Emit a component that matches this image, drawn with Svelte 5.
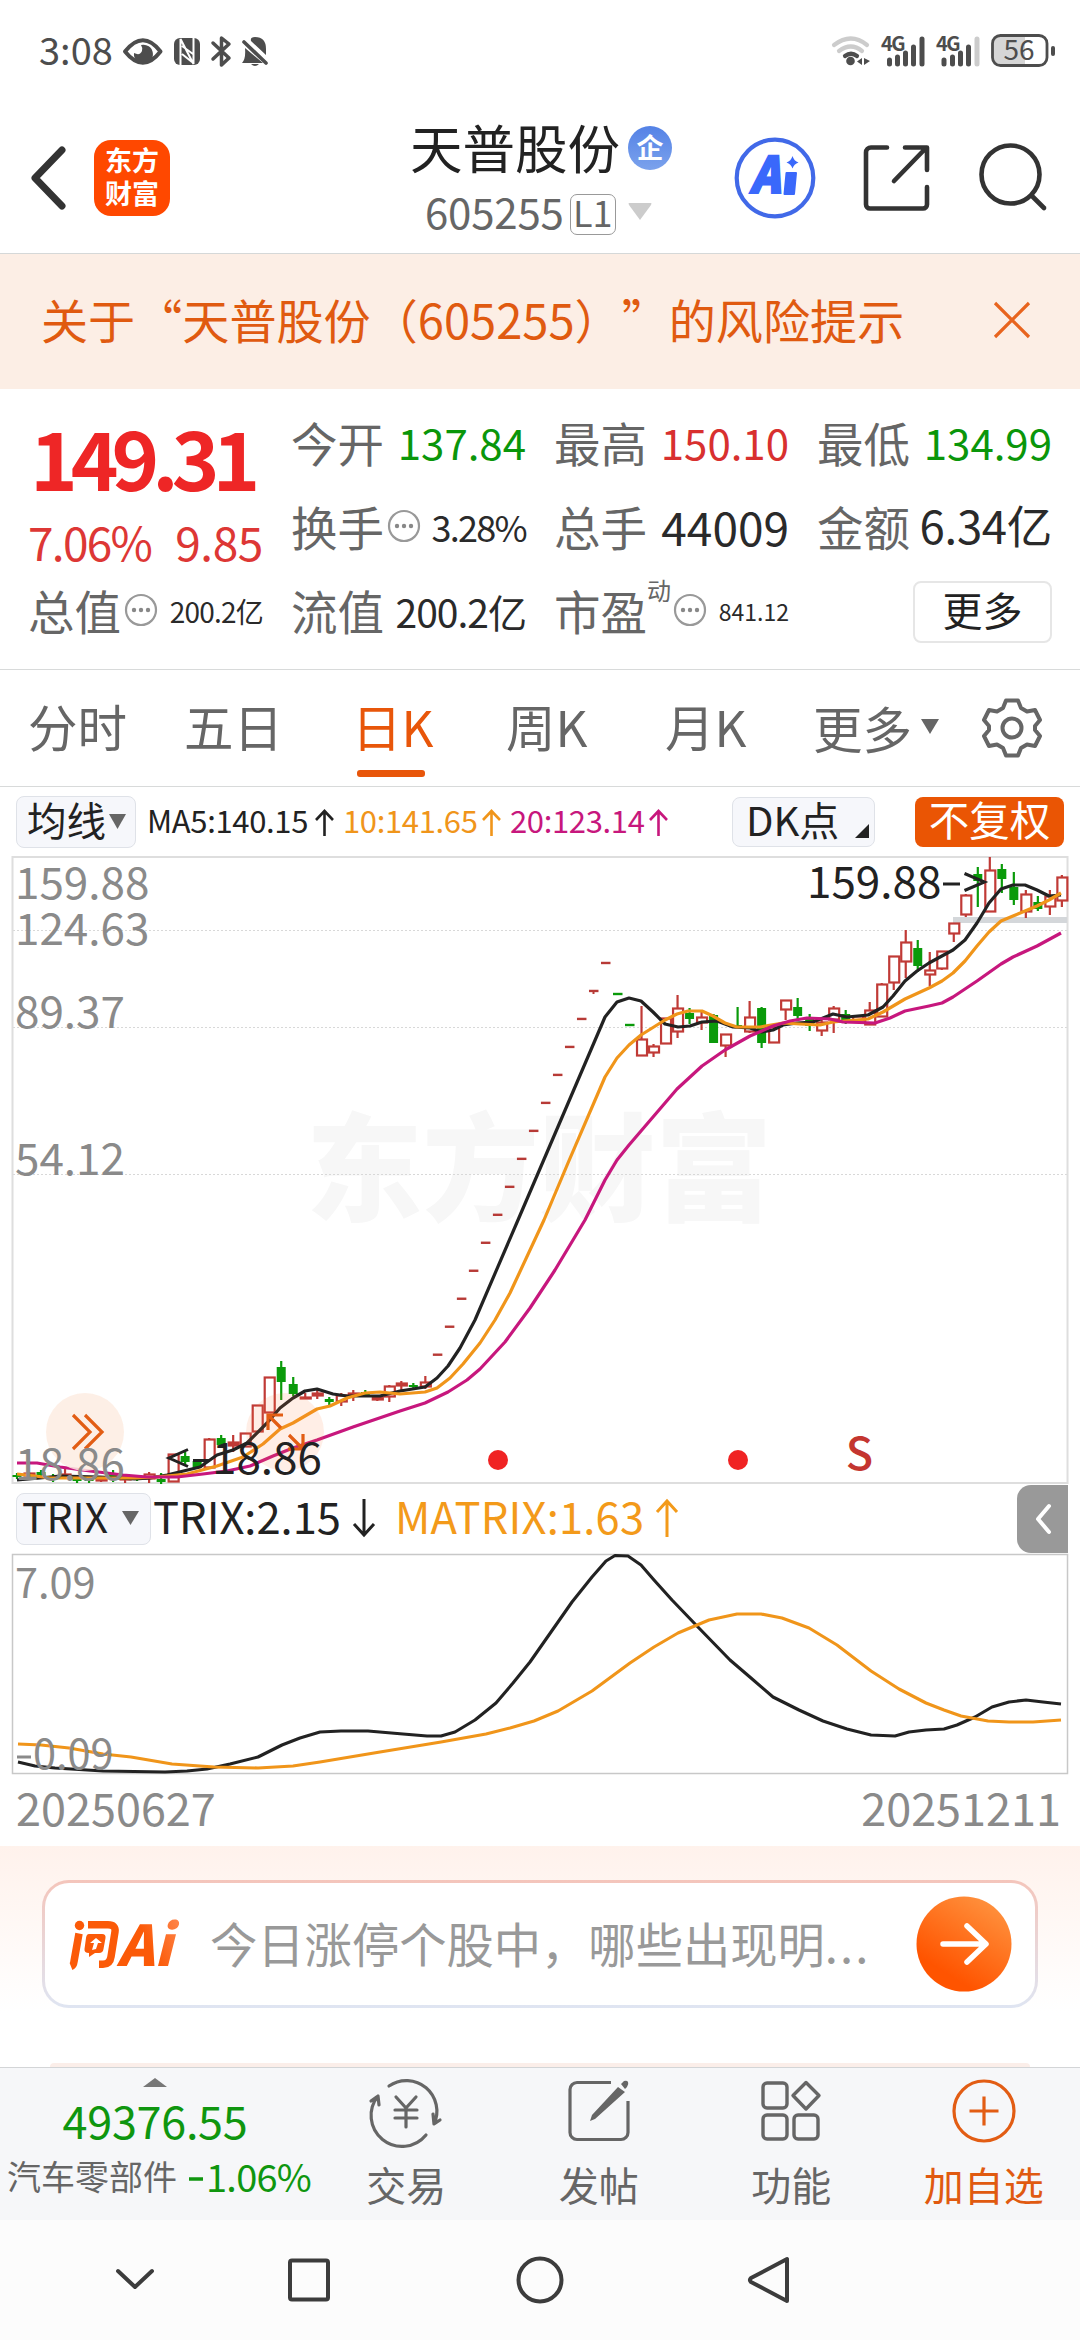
<script>
  const X0 = 17;
  const STEP = 12.01;
  const cx = (i) => X0 + i * STEP;

  // [index, direction, body top, body bottom, wick top, wick bottom]
  const candles = [
    [0, 'g', 1475, 1477, 1473, 1479], [1, 'r', 1473, 1476, 1472, 1478], [2, 'g', 1472, 1475, 1470, 1479],
    [3, 'g', 1476, 1478, 1474, 1482], [4, 'r', 1474, 1477, 1469, 1479], [5, 'g', 1478, 1481, 1475, 1483],
    [6, 'g', 1478, 1481, 1476, 1483], [7, 'r', 1478, 1481, 1476, 1482], [8, 'g', 1474, 1478, 1470, 1482],
    [9, 'r', 1476, 1480, 1474, 1483], [10, 'g', 1477, 1479, 1475, 1481], [11, 'r', 1474, 1479, 1472, 1483],
    [12, 'g', 1479, 1482, 1473, 1484], [13, 'r', 1454, 1482, 1454, 1482], [14, 'g', 1456, 1462, 1452, 1465],
    [15, 'g', 1461, 1468, 1460, 1469], [16, 'r', 1439, 1468, 1438, 1468], [17, 'g', 1438, 1445, 1435, 1447],
    [18, 'r', 1442, 1446, 1435, 1452], [19, 'r', 1433, 1447, 1433, 1447], [20, 'r', 1405, 1432, 1405, 1432],
    [21, 'r', 1377, 1413, 1377, 1413], [22, 'g', 1367, 1382, 1361, 1400], [23, 'g', 1384, 1394, 1377, 1396],
    [24, 'r', 1397, 1398, 1393, 1399], [25, 'r', 1393, 1396, 1388, 1399], [26, 'g', 1399, 1402, 1397, 1405],
    [27, 'r', 1395, 1402, 1393, 1406], [28, 'r', 1393, 1396, 1390, 1401], [29, 'g', 1392, 1395, 1390, 1396],
    [30, 'r', 1397, 1400, 1395, 1401], [31, 'r', 1386, 1397, 1385, 1402], [32, 'r', 1383, 1386, 1381, 1391],
    [33, 'g', 1385, 1387, 1383, 1390], [34, 'r', 1382, 1387, 1376, 1389],
    [52, 'r', 1039, 1056, 1006, 1056], [53, 'r', 1046, 1053, 1044, 1057], [54, 'r', 1018, 1044, 1018, 1044],
    [55, 'r', 1008, 1032, 995, 1038], [56, 'g', 1013, 1019, 1008, 1024], [57, 'r', 1017, 1023, 1012, 1030],
    [58, 'g', 1015, 1043, 1014, 1043], [59, 'r', 1034, 1046, 1034, 1057], [60, 'g', 1025, 1027, 1007, 1028],
    [61, 'r', 1017, 1032, 1001, 1033], [62, 'g', 1008, 1043, 1007, 1048], [63, 'r', 1027, 1043, 1027, 1043],
    [64, 'r', 1000, 1010, 1000, 1020], [65, 'g', 1007, 1016, 998, 1020], [66, 'g', 1017, 1026, 1014, 1031],
    [67, 'r', 1022, 1031, 1020, 1036], [68, 'r', 1008, 1020, 1006, 1033], [69, 'g', 1014, 1020, 1010, 1024],
    [70, 'r', 1016, 1021, 1015, 1022], [71, 'r', 1010, 1025, 1002, 1025], [72, 'r', 984, 1017, 983, 1017],
    [73, 'r', 956, 983, 956, 990], [74, 'r', 942, 962, 930, 978], [75, 'g', 948, 966, 940, 972],
    [76, 'r', 970, 975, 952, 986], [77, 'r', 951, 969, 951, 970], [78, 'r', 923, 934, 923, 942],
    [79, 'r', 895, 915, 894, 917], [80, 'g', 874, 881, 867, 907], [81, 'r', 870, 912, 857, 912],
    [82, 'g', 869, 879, 864, 893], [83, 'g', 887, 900, 872, 905], [84, 'r', 894, 912, 890, 918],
    [85, 'g', 902, 909, 896, 911], [86, 'r', 896, 907, 890, 915], [87, 'r', 877, 901, 875, 907]
  ];

  // one-price trading days
  const dashes = [
    ...Array.from({ length: 15 }, (_, k) => [35 + k, 'r', 1354.7 - k * 27.98]),
    [50, 'g', 994], [51, 'g', 1025]
  ];

  const ma5 = '17,1480 40,1478 60,1476 100,1477 135,1479 150,1478 167,1475 200,1467 217,1455 233,1450 247,1443 267,1423 280,1408 293,1398 305,1391 317,1389 333,1394 347,1396 380,1396 400,1391 425,1387 437,1378 448,1366 460,1348 475,1320 518,1220 605,1017 617,1002 629,998 641,1001 653,1012 665,1024 678,1027 690,1026 702,1022 717,1021 733,1027 750,1028 762,1032 773,1030 783,1025 797,1023 813,1022 833,1014 847,1017 868,1015 883,1007 893,996 905,981 917,971 929,963 953,950 965,940 977,923 989,903 1001,889 1013,885 1025,885 1037,890 1049,896 1061,895';
  const ma10 = '17,1474 35,1476 50,1478 100,1478 135,1478 157,1477 187,1474 217,1466 243,1457 263,1444 280,1429 293,1423 317,1409 330,1406 347,1398 365,1393 380,1392 400,1394 425,1392 437,1388 450,1378 463,1364 480,1343 495,1320 510,1293 544,1220 568,1163 605,1077 617,1058 629,1045 641,1035 665,1020 677,1014 688,1011 702,1011 713,1016 725,1023 737,1027 760,1027 783,1023 800,1024 820,1025 833,1022 868,1019 883,1012 905,999 929,988 942,981 953,973 965,961 977,946 989,932 1001,921 1013,916 1025,911 1037,906 1049,900 1061,893';
  const ma20 = '17,1463 37,1463 60,1467 90,1471 123,1475 147,1477 177,1477 203,1474 227,1471 250,1466 273,1456 293,1448 317,1440 353,1427 400,1411 425,1403 448,1392 467,1380 480,1369 505,1342 530,1308 555,1270 585,1220 605,1180 617,1160 629,1145 653,1117 677,1089 702,1066 725,1050 750,1036 773,1026 790,1021 807,1018 830,1019 843,1022 875,1023 890,1018 905,1011 929,1006 942,1003 953,997 977,981 1001,964 1013,957 1037,946 1061,933';
  const trix = '18,1762 35,1766 55,1768 103,1771 165,1772 187,1771 207,1769 230,1764 258,1757 282,1745 300,1738 320,1732 341,1731 368,1731 403,1734 427,1736 441,1736 455,1732 475,1720 496,1703 513,1683 530,1662 551,1632 572,1602 592,1577 606,1561 615,1555.5 628,1556 641,1565 654,1580 672,1600 696,1625 730,1660 751,1678 773,1697 799,1710 823,1721 847,1729 871,1735 895,1736 909,1732 926,1730 944,1729 957,1725 975,1717 992,1707 1009,1702 1026,1700 1043,1702 1061,1704';
  const matrix = '18,1744 41,1745 69,1748 103,1754 131,1757 172,1764 214,1767 258,1768 293,1766 320,1762 380,1752 441,1742 486,1734 510,1728 534,1721 558,1711 592,1691 630,1663 654,1647 678,1633 709,1620 737,1614 761,1614 782,1618 809,1628 837,1645 871,1671 899,1689 926,1703 944,1710 961,1716 988,1721 1009,1722 1033,1722 1061,1720';

  const gridLines = [930.5, 1027.5, 1174.5];
  const priceLabels = [['159.88', 899], ['124.63', 945], ['89.37', 1028], ['54.12', 1175]];
</script>

{#snippet dots()}
  <svg class="dots" width="34" height="34" viewBox="0 0 34 34">
    <circle cx="17" cy="17" r="15" fill="none" stroke="#999" stroke-width="2.2" />
    <g fill="#888"><circle cx="10" cy="17" r="2.2" /><circle cx="17" cy="17" r="2.2" /><circle cx="24" cy="17" r="2.2" /></g>
  </svg>
{/snippet}

{#snippet up(color)}
  <svg class="arrow" width="19" height="27" viewBox="0 0 19 27"><path d="M9.500 27V3M1 11l8.500-9 8.500 9" fill="none" stroke={color} stroke-width="2.600" /></svg>
{/snippet}

<div class="screen">
  <div class="status">
    <span class="clock">3:08</span>
    <svg class="st-icons" width="146" height="32" viewBox="123 35 146 32">
      <path d="M125 51.500Q143 29 160.500 51.500Q143 74 125 51.500Z" fill="none" stroke="#4d4d4d" stroke-width="4" stroke-linejoin="round" />
      <path d="M141 45a9.500 9.500 0 1 1-7 8q6 3 8-2q1-3-1-6z" fill="#4d4d4d" />
      <path d="M180 38h14a6 6 0 0 1 6 6v15a6 6 0 0 1-6 6h-14a6 6 0 0 1-6-6V44a6 6 0 0 1 6-6z" fill="#4d4d4d" />
      <path d="M180.500 65V39l13 25V38M182 46l11 8M182 54l10 8" fill="none" stroke="#fff" stroke-width="2" />
      <path d="M213 43l16 15-7.500 7V38l7.500 6-16 15" fill="none" stroke="#4d4d4d" stroke-width="3.500" stroke-linejoin="round" stroke-linecap="round" />
      <path d="M251 41q-1-4 4-4q11 0 11 12v6zM245 48l18 15h-21q4-4 3-15zM251 64h8q-4 4-8 0z" fill="#4d4d4d" />
      <path d="M244 42l22 21" stroke="#4d4d4d" stroke-width="3.600" stroke-linecap="round" />
    </svg>
    <svg class="st-right" width="226" height="34" viewBox="831 34 226 34">
      <g fill="none" stroke-width="4.200" stroke-linecap="round">
        <path d="M834 45q17-13 33 0" stroke="#ccc" /><path d="M839 51q12-9 23 0" stroke="#ccc" /><path d="M845 56q6-4.500 12 0" stroke="#4d4d4d" />
      </g>
      <circle cx="850.500" cy="61" r="4.300" fill="#4d4d4d" />
      <path d="M862 58v7l-5-3.500zM864 58v7l6-4z" fill="#4d4d4d" />
      <text x="881" y="51" class="net">4G</text>
      <text x="936" y="51" class="net">4G</text>
      <g stroke="#4d4d4d" stroke-width="5" stroke-linecap="round">
        <path d="M889.500 60v4M897.500 57v7M905.500 53v11M913.500 47v17M922 39v25M944 60v4M952.500 57v7M960.500 53v11M968.500 47v17" />
        <path d="M977 39v25" stroke="#ccc" />
      </g>
      <path d="M999 37h26v27h-26a6 6 0 0 1-6-6V43a6 6 0 0 1 6-6z" fill="#d6d6d6" />
      <rect x="992.500" y="35.500" width="54.500" height="30" rx="8" fill="none" stroke="#4d4d4d" stroke-width="2.800" />
      <path d="M1053 48v6" stroke="#4d4d4d" stroke-width="4" stroke-linecap="round" />
      <text x="1019" y="60" class="batt">56</text>
    </svg>
  </div>

  <header>
    <svg class="back" width="37" height="66" viewBox="0 0 37 66"><path d="M32 5L5 33l27 28" fill="none" stroke="#333" stroke-width="7" stroke-linecap="round" stroke-linejoin="round" /></svg>
    <div class="logo"><span>东方</span><span>财富</span></div>
    <div class="title">
      <div class="name">天普股份<span class="qi">企</span></div>
      <div class="code">605255<span class="lv">L1</span><svg width="24" height="17" viewBox="0 0 24 17"><path d="M1 0h22q1 0 0 2L12 17 1 2q-1-2 0-2z" fill="#ccc" /></svg></div>
    </div>
    <svg class="tools" width="314" height="84" viewBox="734 136 314 84">
      <circle cx="775" cy="178" r="38.300" fill="none" stroke="#4169e8" stroke-width="4.200" />
      <text x="750" y="198" class="ai" textLength="30" lengthAdjust="spacingAndGlyphs">A</text>
      <path d="M786.500 173h9.500l-2 21h-9.500z" fill="#3a68fb" stroke="#3a68fb" stroke-width="2" stroke-linejoin="round" />
      <path d="M792.500 156q1.500 5 6 6.500q-4.500 1.500-6 6q-1.500-4.500-6-6q4.500-1.500 6-6.500z" fill="#3a68fb" />
      <g fill="none" stroke="#333" stroke-width="4.600" stroke-linecap="round" stroke-linejoin="round">
        <path d="M887 147.500h-16a5 5 0 0 0-5 5v52a4 4 0 0 0 4 4h53a4 4 0 0 0 4-4V187M905 147.500h22V170M926 148l-32 33" />
        <circle cx="1010.500" cy="174.500" r="29" /><path d="M1032 196l12 12" />
      </g>
    </svg>
  </header>

  <div class="banner">
    <span>关于“天普股份（605255）”的风险提示</span>
    <svg width="38" height="38" viewBox="0 0 38 38"><path d="M2 2l34 34M36 2L2 36" stroke="#e8641e" stroke-width="3.200" /></svg>
  </div>

  <section class="quote">
    <div class="price">
      <div class="last">149.31</div>
      <div class="chg"><span>7.06%</span><span class="pt">9.85</span></div>
    </div>
    <div class="cell"><label>今开</label><b class="gr">137.84</b></div>
    <div class="cell"><label>最高</label><b class="rd">150.10</b></div>
    <div class="cell"><label>最低</label><b class="gr">134.99</b></div>
    <div class="cell"><label>换手</label>{@render dots()}<b class="s36">3.28%</b></div>
    <div class="cell"><label>总手</label><b class="s46">44009</b></div>
    <div class="cell"><label>金额</label><b class="s44">6.34亿</b></div>
    <div class="cell"><label>总值</label>{@render dots()}<b class="s28">200.2亿</b></div>
    <div class="cell"><label>流值</label><b class="s38">200.2亿</b></div>
    <div class="cell"><label>市盈</label><sup>动</sup>{@render dots()}<b class="s24">841.12</b></div>
    <div class="cell end"><button class="more">更多</button></div>
  </section>

  <nav class="tabs">
    <span class="t1">分时</span><span class="t2">五日</span><span class="t3 on">日K</span><span class="t4">周K</span><span class="t5">月K</span>
    <span class="t6">更多<svg width="18" height="15" viewBox="0 0 18 15"><path d="M0 0h18L9 15z" fill="#666" /></svg></span>
    <svg class="gear" width="60" height="60" viewBox="-30 -30 60 60">
      <path d="M-6-27.500H6L9-20l6 3.500 8-1.500 5 10-5 6v4l5 6-5 10-8-1.500L9 20l-3 7.500H-6L-9 20l-6-3.500-8 1.500-5-10 5-6v-4l-5-6 5-10 8 1.500L-9-20z" fill="none" stroke="#666" stroke-width="4" stroke-linejoin="round" />
      <circle r="9.500" fill="none" stroke="#666" stroke-width="4" />
    </svg>
  </nav>

  <div class="ma">
    <div class="pill avg">均线<svg width="17" height="15" viewBox="0 0 17 15"><path d="M0 0h17L8.500 15z" fill="#666" /></svg></div>
    <span class="m m5">MA5:140.15{@render up('#222')}</span>
    <span class="m m10">10:141.65{@render up('#f0951a')}</span>
    <span class="m m20">20:123.14{@render up('#c7177d')}</span>
    <div class="pill dk">DK点<svg width="14" height="14" viewBox="0 0 14 14"><path d="M14 0v14H0z" fill="#222" /></svg></div>
    <div class="fq">不复权</div>
  </div>

  <svg class="chart" width="1080" height="634" viewBox="0 852 1080 634">
    <text x="306" y="1212" class="wm">东方财富</text>
    {#each gridLines as y}
      <line x1="13" x2="1067" y1={y} y2={y} stroke="#d8d8d8" stroke-width="1" stroke-dasharray="2 2" />
    {/each}
    <rect x="12.500" y="857" width="1055" height="626" fill="none" stroke="#dedede" stroke-width="2" />
    <rect x="953" y="917" width="114" height="6" fill="#d4d7da" />
    {#each priceLabels as [t, y]}
      <text x="15" {y} class="axis">{t}</text>
    {/each}
    {#each candles as [i, d, t, b, wt, wb]}
      {#if d === 'g'}
        <line x1={cx(i)} x2={cx(i)} y1={wt} y2={wb} stroke="#0a9a0a" stroke-width="2.200" />
        <rect x={cx(i) - 4.5} y={t} width="9" height={b - t} fill="#0a9a0a" />
      {:else}
        <path d="M{cx(i)} {wt}V{t}M{cx(i)} {b}V{wb}" stroke="#c03a36" stroke-width="2.200" />
        <rect x={cx(i) - 4.5} y={t + 0.5} width="10" height={Math.max(b - t - 1, 1)} fill={b - t < 5 ? '#c03a36' : '#fff'} stroke="#c03a36" stroke-width="2.200" />
      {/if}
    {/each}
    {#each dashes as [i, d, y]}
      <rect x={cx(i) - 4.5} y={y - 1.2} width="9.500" height="2.400" fill={d === 'g' ? '#0a9a0a' : '#b73a36'} />
    {/each}
    <line x1="593.500" x2="593.500" y1="991" y2="994" stroke="#b73a36" stroke-width="2" />
    <g fill="none" stroke-width="3.200" stroke-linejoin="round">
      <polyline points={ma5} stroke="#222" />
      <polyline points={ma10} stroke="#f0951a" />
      <polyline points={ma20} stroke="#c7177d" />
    </g>
    <circle cx="85" cy="1432" r="39" fill="#fdece2" fill-opacity=".85" />
    <circle cx="285" cy="1432" r="39" fill="#ff7a3c" fill-opacity=".13" />
    <g fill="none" stroke="#e25d14" stroke-width="3.200">
      <path d="M73 1415l17 17-17 17M85 1415l17 17-17 17" />
      <path d="M268 1430v-15h15M268 1415l13 13M303 1434v15h-15M303 1449l-14-14" />
    </g>
    <text x="15" y="1480" class="axis">18.86</text>
    <text x="807" y="898" class="mark">159.88</text>
    <path d="M943 884h17M964.500 873.500l20 8.500-20 8.500M188 1449.500l-19 8.500 19 8.500M193 1460.500h16" fill="none" stroke="#222" stroke-width="3" />
    <text x="212" y="1474" class="mark">18.86</text>
    <circle cx="498" cy="1460" r="10" fill="#f02323" /><circle cx="738" cy="1460" r="10" fill="#f02323" />
    <text x="859.500" y="1470" class="sell">S</text>
  </svg>

  <div class="trixbar">
    <div class="pill tp">TRIX<svg width="17" height="14" viewBox="0 0 17 14"><path d="M0 0h17L8.500 14z" fill="#666" /></svg></div>
    <span class="tv">TRIX:2.15<svg width="24" height="38" viewBox="0 0 24 38"><path d="M12 0v36M2 25l10 11 10-11" fill="none" stroke="#222" stroke-width="3" /></svg></span>
    <span class="mv">MATRIX:1.63<svg width="24" height="38" viewBox="0 0 24 38"><path d="M12 38V2M2 13L12 2l10 11" fill="none" stroke="#f39a1a" stroke-width="3" /></svg></span>
    <div class="fold"><svg width="18" height="32" viewBox="0 0 18 32"><path d="M15 3L4 16l11 13" fill="none" stroke="#fff" stroke-width="4" stroke-linecap="round" stroke-linejoin="round" /></svg></div>
  </div>

  <svg class="chart" width="1080" height="222" viewBox="0 1553 1080 222">
    <rect x="12.500" y="1554.500" width="1055" height="219" fill="none" stroke="#c8c8c8" stroke-width="1.500" />
    <g fill="none" stroke-width="3.100" stroke-linejoin="round">
      <polyline points={trix} stroke="#222" />
      <polyline points={matrix} stroke="#f0951a" />
    </g>
    <text x="15" y="1598" class="axis sm">7.09</text>
    <path d="M17 1757h14" stroke="#8a8a8a" stroke-width="3" />
    <text x="33" y="1769" class="axis sm">0.09</text>
  </svg>

  <div class="dates"><span>20250627</span><span>20251211</span></div>

  <section class="ask">
    <div class="card">
      <svg class="wen" width="110" height="50" viewBox="68 1919 110 50">
        <defs><linearGradient id="og" x1="0" x2="1" y1="0.600" y2="0"><stop offset="0.400" stop-color="#fb5a08" /><stop offset="1" stop-color="#ff8f5a" /></linearGradient></defs>
        <g fill="none" stroke="#fb5a08" stroke-width="7.500" stroke-linecap="butt" stroke-linejoin="round">
          <path d="M79 1933.500l-5 28q-.5 4-3 5" /><path d="M88 1924.800h20q8 0 7 7l-4 25q-1 7.500-8 7.500h-4" />
        </g>
        <circle cx="79.500" cy="1925.500" r="4.700" fill="#fb5a08" />
        <path d="M89 1934h13q4 0 3.500 4l-2 11q-.5 4-4.500 4h-4l-6 4v-4q-5 0-4.500-4l1.500-11q.5-4 3-4z" fill="#fb5a08" />
        <path d="M96 1938l6 5h-4l-2 6-4 1 2-7h-4z" fill="#fff" />
        <text x="117" y="1966" class="wai" fill="url(#og)" textLength="55" lengthAdjust="spacingAndGlyphs">Ai</text>
      </svg>
      <span class="q">今日涨停个股中，哪些出现明<i>...</i></span>
      <svg class="go" width="96" height="96" viewBox="0 0 96 96">
        <defs><linearGradient id="gg" x1="0.800" y1="0" x2="0.300" y2="0.800"><stop offset="0" stop-color="#ff9440" /><stop offset="1" stop-color="#ff5400" /></linearGradient></defs>
        <circle cx="48" cy="48" r="47.500" fill="url(#gg)" />
        <path d="M27 48h42M51 30l19 18-19 18" fill="none" stroke="#fff" stroke-width="5.500" stroke-linecap="round" stroke-linejoin="round" />
      </svg>
    </div>
    <div class="peek"></div>
  </section>

  <footer>
    <div class="idx">
      <svg width="24" height="9" viewBox="0 0 24 9"><path d="M12 0l12 9H0z" fill="#777" /></svg>
      <div class="iv">49376.55</div>
      <div class="in"><span>汽车零部件</span><b><svg width="14" height="4" viewBox="0 0 14 4"><path d="M0 2h14" stroke="#0f960f" stroke-width="3.500" /></svg>1.06%</b></div>
    </div>
    <div class="act">
      <svg width="76" height="68" viewBox="-38 -34 76 68">
        <g fill="none" stroke="#666" stroke-width="3.200" stroke-linecap="round" stroke-linejoin="round">
          <path d="M-17-25A30.500 30.500 0 0 1 28 13l6-4M28 13l-1-10M20 24A30.500 30.500 0 0 1-28-15l-7 5M-28-15l1 9" />
          <path d="M-10-14L0-3l10-11M0-3v19M-11-1h22M-11 7h22" />
        </g>
      </svg>
      <span>交易</span>
    </div>
    <div class="act">
      <svg width="76" height="68" viewBox="-38 -34 76 68">
        <path d="M12-28.500h-34a7 7 0 0 0-7 7v43a7 7 0 0 0 7 7h44a7 7 0 0 0 7-7V-10" fill="none" stroke="#666" stroke-width="3.200" />
        <path d="M19-24l7 5L-4 8l-5 2 2-6zM22-27l3-3q3-1 4 1t-1 5l-2 2z" fill="#666" />
      </svg>
      <span>发帖</span>
    </div>
    <div class="act">
      <svg width="76" height="68" viewBox="-38 -34 76 68">
        <g fill="none" stroke="#666" stroke-width="3.400" stroke-linejoin="round">
          <rect x="-28" y="-28" width="24" height="25" rx="4" /><rect x="-28" y="4" width="24" height="24" rx="4" /><rect x="3" y="4" width="24" height="24" rx="4" />
          <path d="M15-28.500L28-15.500 15-2 2-15.500z" />
        </g>
      </svg>
      <span>功能</span>
    </div>
    <div class="act hot">
      <svg width="76" height="68" viewBox="-38 -34 76 68"><g fill="none" stroke="#e25d14" stroke-width="3.200"><circle r="30" /><path d="M-14.500 0h29M0-14.500v29" /></g></svg>
      <span>加自选</span>
    </div>
  </footer>

  <svg class="sysnav" width="1080" height="120" viewBox="0 2220 1080 120">
    <g fill="none" stroke="#3c3c3c" stroke-width="4" stroke-linejoin="round" stroke-linecap="round">
      <path d="M118 2271l17 16 17-16" /><rect x="290" y="2260.500" width="38" height="39" rx="2" /><circle cx="540" cy="2280" r="21.500" />
      <path d="M787 2259v42L751 2282q-2-2 0-4z" />
    </g>
  </svg>
</div>

<style>
  :global(body) { margin: 0; background: #fff; }
  .screen, .screen :is(button, text) { font-family: "Noto Sans CJK SC", "Noto Sans", sans-serif; }
  .screen { width: 1080px; height: 2340px; overflow: hidden; background: #fff; color: #222; line-height: 1; display: flex; flex-direction: column; }
  .screen > * { flex: none; box-sizing: border-box; }
  svg { display: block; flex: none; overflow: visible; }
  span, div, label, b { white-space: nowrap; }
  b, i { font-weight: 400; font-style: normal; }

  .status { height: 102px; display: flex; align-items: center; padding: 0 23px 0 39px; }
  .clock { font-size: 38px; color: #4d4d4d; width: 84px; padding-bottom: 5px; }
  .st-right { margin-left: auto; }
  .net { font-size: 20px; font-weight: 700; fill: #4d4d4d; letter-spacing: -1.5px; }
  .batt { font-size: 28px; fill: #4d4d4d; text-anchor: middle; }

  header { height: 152px; display: flex; align-items: center; padding: 0 32px 0 30px; border-bottom: 1px solid #d5d8d8; }
  .logo { width: 76px; height: 76px; margin-left: 27px; border-radius: 17px; background: #ff4800; color: #fff; font-size: 27px; font-weight: 700; display: flex; flex-direction: column; align-items: center; justify-content: center; gap: 6px; padding-bottom: 4px; box-sizing: border-box; }
  .title { width: 265px; margin-left: 240px; display: flex; flex-direction: column; }
  .name { display: flex; align-items: center; height: 70px; font-size: 52.5px; }
  .qi { width: 44px; height: 44px; margin: 3px 0 0 8px; border-radius: 50%; background: linear-gradient(#5482e6, #7ba2ec); color: #fff; font-size: 27px; font-weight: 700; line-height: 41px; text-align: center; }
  .code { display: flex; align-items: center; height: 60px; font-size: 42px; color: #666; padding: 0 0 3px 15px; letter-spacing: -.2px; }
  .lv { width: 44px; height: 39px; margin: 6px 12px 0 6px; border: 1.500px solid #999; border-radius: 7px; font-size: 36px; line-height: 33px; text-align: center; }
  .tools { margin-left: auto; }
  .ai { font-size: 50px; font-weight: 900; font-style: italic; fill: #3a68fb; stroke: #3a68fb; stroke-width: 2px; }
  .ai { transform: translateY(-5px); }

  .banner { height: 135px; background: #fceee5; color: #e05a10; display: flex; align-items: center; justify-content: space-between; padding: 0 49px 4px 41px; font-size: 47.100px; }
  .banner span { padding-bottom: 1px; text-spacing-trim: space-all; font-feature-settings: "chws" 0, "halt" 0; }

  .quote { height: 281px; border-bottom: 1px solid #d8dada; display: grid; grid-template-columns: repeat(4, 235px); grid-template-rows: repeat(3, 84px); column-gap: 28px; padding: 11px 28px 0; }
  .price { grid-row: span 2; color: #ee2626; }
  .last { font-size: 81px; font-weight: 700; letter-spacing: -7px; margin-top: 15px; padding-left: 2px; height: 81px; }
  .chg { display: flex; justify-content: space-between; font-size: 46px; letter-spacing: -1.700px; color: #dd3735; margin-top: 22px; }
  .pt { letter-spacing: -.4px; }
  .cell { display: flex; align-items: center; }
  .cell label { font-size: 46.500px; color: #666; }
  .cell b { margin-left: auto; color: #2a2a2a; padding-bottom: 0; }
  .cell b { font-size: 42px; }
  .cell b.gr { color: #0a960a; } .cell b.rd { color: #d8302f; }
  .cell b.s36 { font-size: 36px; letter-spacing: -1.700px; } .cell b.s46 { font-size: 46px; } .cell b.s44 { font-size: 45.500px; letter-spacing: -.3px; padding-bottom: 2px; }
  .cell b.s28 { font-size: 28px; letter-spacing: -.8px; } .cell b.s38 { font-size: 39px; letter-spacing: -1px; padding-top: 2px; } .cell b.s24 { font-size: 23px; padding-top: 3px; }
  .cell b.s28 { padding-top: 2px; }
  .dots { margin: 0 0 0 3px; }
  .cell sup { font-size: 24px; color: #666; align-self: flex-start; margin-top: 10px; margin-right: -1px; }
  .end { justify-content: flex-end; }
  .more { width: 139px; height: 62px; border: 2px solid #e6e6e6; border-radius: 8px; background: #fff; color: #222; font-size: 40px; line-height: 1; padding: 0 0 5px; margin-top: 3px; }

  .tabs { height: 117px; border-bottom: 1px solid #d8dada; display: flex; align-items: center; padding-left: 28px; font-size: 49.500px; color: #666; }
  .tabs span { height: 116px; line-height: 112px; }
  .t1 { width: 156px; } .t2 { width: 168px; } .t3 { width: 154px; } .t4 { width: 159px; } .t5 { width: 148px; }
  .tabs .t6 { display: flex; align-items: center; gap: 9px; width: 169px; }
  .t6 svg { margin-bottom: 4px; }
  .on { color: #e8560a; display: flex; flex-direction: column; }
  .on::after { content: ""; width: 68px; height: 7px; margin: -12px 0 0 5px; border-radius: 3px; background: #e8560a; }
  .gear { margin-bottom: 1px; }

  .ma { height: 65px; display: flex; align-items: center; padding: 4px 16px 0 16px; }
  .pill { box-sizing: border-box; height: 52px; background: #f6f7fb; border: 1.500px solid #dfe2e8; border-radius: 8px; display: flex; align-items: center; color: #222; padding-bottom: 5px; }
  .avg { width: 120px; font-size: 39.500px; padding-left: 10px; gap: 3px; }
  .pill svg { margin-top: 4px; }
  .m { font-size: 31px; display: flex; align-items: center; justify-content: space-between; padding-bottom: 4px; letter-spacing: -.35px; }
  .arrow { margin: 5px 0 0 2px; }
  .m5 { margin-left: 11px; color: #222; width: 187px; } .m10 { color: #f0951a; width: 158px; margin-left: 9px; } .m20 { color: #c7177d; width: 158px; margin-left: 9px; }
  .dk { width: 143px; height: 50px; margin-left: auto; font-size: 40px; padding-left: 13px; }
  .pill.dk svg { margin: 24px 5px 0 auto; }
  .fq { width: 149px; height: 50px; margin-left: 40px; border-radius: 8px; background: #ea5504; color: #fff; font-size: 40.500px; line-height: 43px; text-align: center; }

  .axis { font-size: 44px; fill: #8a8a8a; } .sm { font-size: 41.500px; }
  .mark { font-size: 44px; fill: #222; }
  .wm { font-size: 116.500px; font-weight: 900; fill: #f7f7f7; }
  .sell { font-size: 45px; font-weight: 500; fill: #c43530; text-anchor: middle; }

  .trixbar { height: 67px; display: flex; align-items: center; padding: 0 12px 0 16px; }
  .tp { width: 135px; font-size: 41px; padding: 0 11px 6px 5px; justify-content: space-between; margin-bottom: 2px; }
  .tv, .mv { display: flex; align-items: center; gap: 11px; font-size: 43.500px; margin: 0 0 7px 2px; }
  .tv { width: 221px; justify-content: space-between; } .mv { color: #f39a1a; margin-left: 21px; letter-spacing: .2px; }
  .tv svg, .mv svg { margin-top: 3px; }
  .fold { width: 51px; height: 68px; margin: 0 0 2px auto; border-radius: 14px 0 0 14px; background: #999; display: flex; align-items: center; justify-content: center; }

  .dates { height: 71px; display: flex; justify-content: space-between; padding: 9px 19px 0 16px; font-size: 45px; color: #8a8a8a; }

  .ask { height: 221px; background: linear-gradient(#fff2ec, #fff 75%); display: flex; flex-direction: column; align-items: center; padding-top: 34px; }
  .card { width: 996px; height: 128px; box-sizing: border-box; border: 3px solid transparent; border-radius: 27px; background: linear-gradient(#fff, #fff) padding-box, linear-gradient(#f4c5bb, #dfe5f2) border-box; display: flex; align-items: center; padding: 0 23px; }
  .wai { font-size: 56px; font-weight: 900; font-style: italic; }
  .q { margin-left: 32px; font-size: 47.300px; color: #999; padding-bottom: 3px; } .q i { letter-spacing: 2px; }
  .go { margin-left: auto; }
  .peek { width: 980px; height: 4px; margin-top: 55px; border-radius: 27px 27px 0 0; background: #fbeee9; }

  footer { height: 153px; background: #f6f7f9; border-top: 1px solid #d3d5d7; display: grid; grid-template-columns: 310px repeat(4, 1fr); }
  .idx { display: flex; flex-direction: column; align-items: center; padding-top: 10px; }
  .iv { font-size: 45px; color: #0f960f; letter-spacing: -.3px; margin-top: 10px; }
  .in { display: flex; align-items: center; gap: 12px; font-size: 34px; color: #666; margin-top: 15px; padding-left: 8px; }
  .in b { display: flex; align-items: center; gap: 3px; font-size: 38px; letter-spacing: -.8px; color: #0f960f; }
  .in b svg { margin-top: 5px; }
  .act { display: flex; flex-direction: column; align-items: center; padding-top: 9px; font-size: 40px; color: #666; }
  .act span { margin-top: 19px; }
  .hot { color: #e05a10; }
  .sysnav { background: #fcfcfc; }
</style>
